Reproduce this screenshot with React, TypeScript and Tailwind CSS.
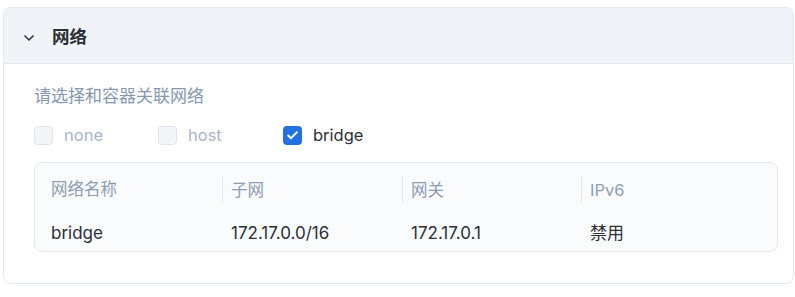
import { ChevronDown, Check } from 'lucide-react';

const networks = [{ name: 'bridge', subnet: '172.17.0.0/16', gateway: '172.17.0.1', ipv6: '禁用' }];

const options = [
  { label: 'none', checked: false, disabled: true, width: 'w-[124px]' },
  { label: 'host', checked: false, disabled: true, width: 'w-[125px]' },
  { label: 'bridge', checked: true, disabled: false, width: '' },
];

function Checkbox({ label, checked, disabled, width }: { label: string; checked: boolean; disabled: boolean; width: string }) {
  return (
    <label className={`flex items-center gap-[11px] ${width}`}>
      {checked ? (
        <span className="flex h-[19px] w-[19px] items-center justify-center rounded-[4px] bg-[#2370e3]">
          <Check className="h-[13px] w-[13px] text-white" strokeWidth={3.5} />
        </span>
      ) : (
        <span className="h-[19px] w-[19px] rounded-[4px] border border-[#dde4ee] bg-[#f3f5f8]" />
      )}
      <span className={disabled ? 'text-[#a9b6c9]' : 'text-[#2b2f36]'}>{label}</span>
    </label>
  );
}

export default function App() {
  return (
    <div
      className="h-[297px] w-[795px] bg-white pt-[7px] pl-[3px]"
      style={{ fontFamily: 'Inter, "Noto Sans CJK SC", sans-serif' }}
    >
      <section className="w-[791px] overflow-hidden rounded-[8px] border border-[#e3e8ef] bg-white">
        {/* Header */}
        <header className="flex h-[56px] items-center border-b border-[#e3e8ef] bg-[#f0f3f8] pt-[4px] pl-[17px]">
          <ChevronDown className="h-[16px] w-[16px] text-[#333a44]" strokeWidth={2.5} />
          <h2 className="ml-[15px] text-[17.5px] font-bold text-[#2b2f36]">网络</h2>
        </header>

        {/* Body */}
        <div className="pt-[20px] pb-[31px] pl-[30px] pr-[15px]">
          <p className="h-[24px] text-[17px] leading-[24px] text-[#8797b0]">请选择和容器关联网络</p>

          <div className="mt-[16px] flex h-[22px] items-center text-[16.5px]">
            {options.map((o) => (
              <Checkbox key={o.label} {...o} />
            ))}
          </div>

          <div className="mt-[16px] overflow-hidden rounded-[8px] border border-[#e2e8f0] bg-[#f9fbfd] text-[17px]">
            <div className="grid h-[53px] grid-cols-[187px_180px_179px_1fr] items-center text-[16.5px] text-[#8e9db3]">
              <div className="pl-[16px]">网络名称</div>
              <div className="border-l border-[#e2e8f0] pl-[8px] leading-[26px]">子网</div>
              <div className="border-l border-[#e2e8f0] pl-[8px] leading-[26px]">网关</div>
              <div className="border-l border-[#e2e8f0] pl-[8px] leading-[26px]">IPv6</div>
            </div>
            {networks.map((n) => (
              <div key={n.name} className="grid h-[35px] grid-cols-[187px_180px_179px_1fr] items-center text-[#2b2f36]">
                <div className="pl-[16px]">{n.name}</div>
                <div className="pl-[9px]">{n.subnet}</div>
                <div className="pl-[9px]">{n.gateway}</div>
                <div className="pl-[9px]">{n.ipv6}</div>
              </div>
            ))}
          </div>
        </div>
      </section>
    </div>
  );
}
